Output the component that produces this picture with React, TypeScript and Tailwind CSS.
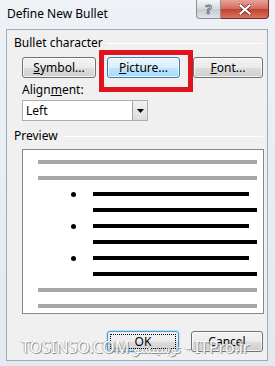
import React from "react";

const font = { fontFamily: '"Noto Sans", "Open Sans", "DejaVu Sans", sans-serif' };

function Btn({ w, children, variant = "normal" }: { w: string; children: React.ReactNode; variant?: "normal" | "hot" | "default" }) {
  const base = "h-[21px] rounded-[3px] border flex items-center justify-center text-[12px] text-black leading-none";
  const v =
    variant === "hot"
      ? "border-[#3c7fb1] bg-[linear-gradient(#eaf6fd_0%,#d9f0fc_50%,#bee6fd_51%,#a7d9f5_100%)]"
      : "border-[#707070] bg-[linear-gradient(#f2f2f2_0%,#ebebeb_50%,#dddddd_51%,#cfcfcf_100%)]";
  return (
    <div className={`${base} ${v} ${w} shadow-[inset_0_0_0_1px_rgba(255,255,255,0.7)]`}>
      {children}
    </div>
  );
}

function Lines() {
  const gray = "h-[4px] bg-[#a6a6a6]";
  const bullet = (
    <div className="flex items-center h-[4px]">
      <div className="w-[38px] flex justify-end">
        <div className="w-[5px] h-[5px] rounded-full bg-black" />
      </div>
      <div className="ml-[17px] w-[156px] h-[4px] bg-black" />
    </div>
  );
  const long = <div className="ml-[55px] w-[164px] h-[4px] bg-black" />;
  return (
    <div className="flex flex-col gap-[12px] pt-[10px] pl-[15px]">
      <div className={`${gray} w-[219px]`} />
      <div className={`${gray} w-[219px]`} />
      {bullet}
      {long}
      {bullet}
      {long}
      {bullet}
      {long}
      <div className={`${gray} w-[219px]`} />
      <div className={`${gray} w-[219px]`} />
    </div>
  );
}

export default function App() {
  return (
    <div
      className="relative w-[275px] h-[366px] overflow-hidden bg-[linear-gradient(#eef2f7,#e2e9f1)] flex flex-col"
      style={font}
    >
      {/* title bar */}
      <div className="h-[29px] flex justify-between items-start shrink-0">
        <div className="pl-[7px] pt-[6px] text-[12px] text-black leading-[16px]">Define New Bullet</div>
        <div className="flex mr-[6px]">
          <div className="w-[25px] h-[19px] rounded-bl-[4px] border border-t-0 border-[#8a9099] bg-[linear-gradient(#f4f5f7,#d5d8dd_50%,#c6cad0_51%,#dfe2e6)] flex items-center justify-center text-[13px] font-bold text-[#eef1f4] leading-none [-webkit-text-stroke:0.8px_#56606a]">
            ?
          </div>
          <div className="w-[48px] h-[19px] rounded-br-[4px] border border-t-0 border-l-0 border-[#7a2a22] bg-[linear-gradient(#e8a498,#d26a5c_50%,#c2402e_51%,#d8735f)] flex items-center justify-center">
            <svg width="12" height="11" viewBox="0 0 12 11">
              <path d="M1.5 1.5 L10.5 9.5 M10.5 1.5 L1.5 9.5" stroke="#5a2018" strokeWidth="3.6" strokeLinecap="square" />
              <path d="M1.5 1.5 L10.5 9.5 M10.5 1.5 L1.5 9.5" stroke="#ffffff" strokeWidth="2.2" strokeLinecap="square" />
            </svg>
          </div>
        </div>
      </div>

      {/* panel */}
      <div className="mx-[6px] mr-[7px] h-[332px] border border-[#a0aab5] bg-[#f0f0f0] flex flex-col text-[12px] text-black">
        {/* group header */}
        <div className="mt-[5px] h-[16px] flex items-center pl-[7px] pr-[4px]">
          <span className="leading-[16px]">Bullet character</span>
          <div className="flex-1 ml-[4px] h-px bg-[#dcdcdc] border-b border-white" />
        </div>
        {/* buttons */}
        <div className="mt-[6px] flex pl-[15px]">
          <Btn w="w-[74px]">
            <span><span className="underline">S</span>ymbol...</span>
          </Btn>
          <div className="ml-[11px]">
            <Btn w="w-[73px]" variant="hot">
              <span><span className="underline">P</span>icture...</span>
            </Btn>
          </div>
          <div className="ml-[13px]">
            <Btn w="w-[70px]">
              <span><span className="underline">F</span>ont...</span>
            </Btn>
          </div>
        </div>
        {/* alignment */}
        <div className="mt-[4px] pl-[15px] leading-[16px] h-[16px]">
          Align<span className="underline">m</span>ent:
        </div>
        <div className="mt-[2px] ml-[15px] w-[126px] h-[21px] border border-[#abadb3] bg-white flex items-center">
          <span className="pl-[3px] flex-1 leading-none">Left</span>
          <div className="w-[15px] h-[19px] border-l border-[#a0a0a0] bg-[linear-gradient(#f2f2f2,#dcdcdc)] flex items-center justify-center">
            <svg width="7" height="4" viewBox="0 0 7 4">
              <path d="M0 0 L7 0 L3.5 4 Z" fill="#000" />
            </svg>
          </div>
        </div>
        {/* preview header */}
        <div className="mt-[7px] h-[16px] flex items-center pl-[7px] pr-[4px]">
          <span className="leading-[16px]">Preview</span>
          <div className="flex-1 ml-[6px] h-px bg-[#dcdcdc] border-b border-white" />
        </div>
        {/* preview box */}
        <div className="mt-[5px] ml-[15px] w-[242px] h-[165px] border border-[#828790] bg-white">
          <Lines />
        </div>
        {/* bottom buttons */}
        <div className="mt-[17px] flex pl-[100px]">
          <div className="w-[72px] h-[21px] rounded-[3px] border border-[#3c9ad8] bg-[linear-gradient(#f2f2f2_0%,#ebebeb_50%,#dddddd_51%,#cfcfcf_100%)] p-[2px] shadow-[0_0_0_1px_#bde4f8]">
            <div className="w-full h-full border border-dotted border-black flex items-center justify-center leading-none">OK</div>
          </div>
          <div className="ml-[12px]">
            <Btn w="w-[72px]">Cancel</Btn>
          </div>
        </div>
      </div>

      {/* red annotation box */}
      <div className="absolute left-[99px] top-[50px] w-[94px] h-[42px] border-[5px] border-[#e0141e]" />

      {/* watermark */}
      <div
        className="absolute left-[21px] top-[337px] text-[16px] leading-[20px] text-white whitespace-nowrap [text-shadow:1px_1px_0_#8a8a8a,-1px_0_0_#b0b0b0] opacity-90"
        style={font}
      >
        TOSINSO.COM <span className="text-[13px]">توسینسو</span> - ITPro.ir
      </div>
    </div>
  );
}
